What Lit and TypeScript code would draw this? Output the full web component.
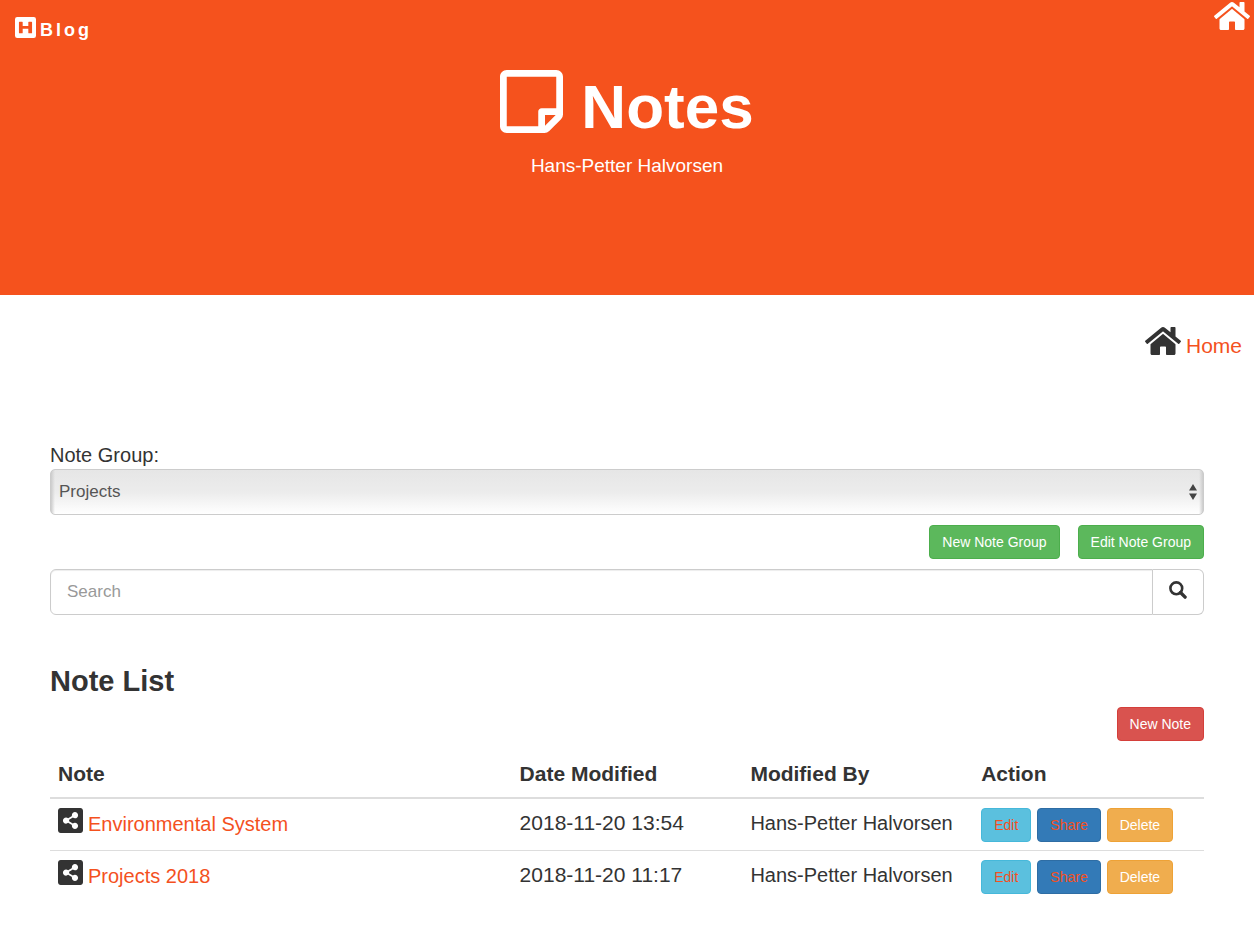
import { LitElement, html, css, svg } from "lit";
import { customElement, state } from "lit/decorators.js";

interface Note {
  title: string;
  modified: string;
  author: string;
}

const homeIcon = svg`<path d="M488 312.7V456c0 13.3-10.7 24-24 24H348c-6.6 0-12-5.4-12-12V356c0-6.6-5.4-12-12-12h-72c-6.6 0-12 5.4-12 12v112c0 6.6-5.4 12-12 12H112c-13.3 0-24-10.7-24-24V312.7c0-3.6 1.6-7 4.4-9.3l188-154.8c4.4-3.6 10.8-3.6 15.3 0l188 154.8c2.7 2.3 4.3 5.7 4.3 9.3zm83.6-60.9L488 182.6V44.4c0-6.6-5.4-12-12-12h-56c-6.6 0-12 5.4-12 12V117l-89.5-73.7c-17.7-14.6-43.3-14.6-61 0L4.4 251.8c-5.1 4.2-5.8 11.8-1.6 16.9l25.5 31c4.2 5.1 11.8 5.8 16.9 1.6l235.2-193.7c4.4-3.6 10.8-3.6 15.3 0l235.2 193.7c5.1 4.2 12.7 3.5 16.9-1.6l25.5-31c4.2-5.2 3.4-12.7-1.7-16.9z"/>`;

const noteIcon = svg`<path d="M448 348.106V80c0-26.51-21.49-48-48-48H48C21.49 32 0 53.49 0 80v351.988c0 26.51 21.49 48 48 48h268.118a48 48 0 0 0 33.941-14.059l83.882-83.882A48 48 0 0 0 448 348.106zm-128 80v-76.118h76.118L320 428.106zM400 80v223.988H296c-13.255 0-24 10.745-24 24v104H48V80h352z"/>`;

const shareIcon = svg`<path d="M448 80v352c0 26.51-21.49 48-48 48H48c-26.51 0-48-21.49-48-48V80c0-26.51 21.49-48 48-48h352c26.51 0 48 21.49 48 48zM304 296c-14.562 0-27.823 5.561-37.783 14.671l-67.958-40.775a56.339 56.339 0 0 0 0-27.793l67.958-40.775C276.177 210.439 289.438 216 304 216c30.928 0 56-25.072 56-56s-25.072-56-56-56-56 25.072-56 56c0 4.797.605 9.453 1.74 13.897l-67.958 40.775C171.823 205.561 158.562 200 144 200c-30.928 0-56 25.072-56 56s25.072 56 56 56c14.562 0 27.823-5.561 37.783-14.671l67.958 40.775a56.088 56.088 0 0 0-1.74 13.897c0 30.928 25.072 56 56 56s56-25.072 56-56C360 321.072 334.928 296 304 296z"/>`;

const brandIcon = svg`<path fill-rule="evenodd" d="M48 32h352a48 48 0 0 1 48 48v352a48 48 0 0 1-48 48H48a48 48 0 0 1-48-48V80a48 48 0 0 1 48-48zM96 132a12 12 0 0 0-12 12v224a12 12 0 0 0 12 12h56a12 12 0 0 0 12-12v-84h120v84a12 12 0 0 0 12 12h56a12 12 0 0 0 12-12V144a12 12 0 0 0-12-12h-56a12 12 0 0 0-12 12v80H164v-80a12 12 0 0 0-12-12z"/>`;

@customElement("app-root")
export class AppRoot extends LitElement {
  static styles = css`
    :host {
      display: block;
      min-height: 100vh;
      background: #fff;
      color: #333;
      font-family: "Liberation Sans", Arial, sans-serif;
      font-size: 20px;
      line-height: 30px;
    }
    *,
    *::before,
    *::after {
      box-sizing: border-box;
    }
    svg {
      display: block;
      fill: currentColor;
      flex: none;
    }
    a {
      color: #f4511e;
      text-decoration: none;
    }
    .hero {
      background: #f5521d;
      color: #fff;
      padding-bottom: 114px;
    }
    .bar {
      display: flex;
      justify-content: space-between;
      height: 70px;
      padding: 2px 4px 0 15px;
    }
    .bar a {
      color: #fff;
    }
    .brand {
      display: flex;
      gap: 4px;
      align-self: flex-start;
      padding-top: 15px;
      font-size: 18px;
      font-weight: bold;
      line-height: 26px;
      letter-spacing: 3px;
    }
    .brand svg {
      width: 21px;
      height: 21px;
    }
    .house {
      width: 36px;
      height: 28px;
    }
    .title {
      display: flex;
      justify-content: center;
      gap: 18px;
      margin: 0;
      font-size: 62px;
      line-height: 74px;
    }
    .title svg {
      width: 63px;
      height: 63px;
    }
    .byline {
      margin: 7px 0 0;
      font-size: 19px;
      text-align: center;
    }
    .crumbs {
      display: flex;
      justify-content: flex-end;
      gap: 5px;
      padding: 32px 12px 0 0;
      height: 147px;
      font-size: 21px;
      line-height: 38px;
    }
    .content {
      padding: 0 50px 32px;
    }
    .label {
      display: block;
      line-height: 27px;
    }
    .picker {
      position: relative;
    }
    .picker select {
      display: block;
      width: 100%;
      height: 46px;
      margin: 0;
      padding: 0 32px 0 8px;
      appearance: none;
      border: 1px solid #ccc;
      border-radius: 5px;
      background:
        linear-gradient(to right, #ccc, transparent) left / 4px 100% no-repeat,
        linear-gradient(to left, #ccc, transparent) right / 4px 100% no-repeat,
        linear-gradient(#e6e6e6, #ececec 50%, #fff);
      color: #555;
      font: inherit;
      font-size: 17px;
    }
    .arrows {
      position: absolute;
      right: 7px;
      top: 15px;
      width: 8px;
      height: 16px;
      fill: #444;
      pointer-events: none;
    }
    .actions {
      display: flex;
      justify-content: flex-end;
      gap: 18px;
      padding: 10px 0;
    }
    .btn {
      display: inline-block;
      height: 34px;
      margin: 0;
      padding: 0 12px;
      border: 1px solid;
      border-radius: 4px;
      color: #fff;
      font: inherit;
      font-size: 14px;
      line-height: 32px;
      white-space: nowrap;
      cursor: pointer;
    }
    .success {
      background: #5cb85c;
      border-color: #4cae4c;
    }
    .danger {
      background: #d9534f;
      border-color: #d43f3a;
    }
    .info {
      background: #5bc0de;
      border-color: #46b8da;
      color: #f4511e;
    }
    .primary {
      background: #337ab7;
      border-color: #2e6da4;
      color: #f4511e;
    }
    .warning {
      background: #f0ad4e;
      border-color: #eea236;
    }
    .search {
      display: flex;
      height: 46px;
    }
    .search input {
      flex: 1;
      min-width: 0;
      margin: 0;
      padding: 0 16px;
      border: 1px solid #ccc;
      border-radius: 6px 0 0 6px;
      box-shadow: inset 0 1px 1px rgba(0, 0, 0, 0.075);
      background: #fff;
      color: #555;
      font: inherit;
      font-size: 17px;
    }
    .search input::placeholder {
      color: #999;
      opacity: 1;
    }
    .search button {
      display: flex;
      justify-content: center;
      width: 51px;
      margin: 0;
      padding: 11px 0 0;
      border: 1px solid #ccc;
      border-left: 0;
      border-radius: 0 6px 6px 0;
      background: #fff;
      color: #333;
    }
    .search svg {
      width: 18px;
      height: 18px;
    }
    h2 {
      margin: 51px 0 0;
      font-size: 29px;
      line-height: 31px;
    }
    table {
      width: 100%;
      border-collapse: collapse;
      table-layout: fixed;
      font-size: 21px;
    }
    th {
      padding: 8px;
      border-bottom: 2px solid #ddd;
      text-align: left;
    }
    td {
      padding: 8px;
      vertical-align: top;
      line-height: 32px;
      white-space: nowrap;
    }
    tr + tr td {
      border-top: 1px solid #ddd;
    }
    .wide {
      width: 40%;
    }
    .name,
    .author {
      font-size: 20px;
    }
    .note {
      display: flex;
      gap: 5px;
      padding-top: 1px;
    }
    .note svg {
      width: 25px;
      height: 25px;
      color: #333;
    }
    .row-actions {
      display: flex;
      gap: 6px;
      padding-top: 1px;
    }
  `;

  @state() private notes: Note[] = [
    { title: "Environmental System", modified: "2018-11-20 13:54", author: "Hans-Petter Halvorsen" },
    { title: "Projects 2018", modified: "2018-11-20 11:17", author: "Hans-Petter Halvorsen" },
  ];

  private renderNote(note: Note) {
    return html`
      <tr>
        <td class="name">
          <div class="note">
            <svg viewBox="0 32 448 448" aria-hidden="true">${shareIcon}</svg>
            <a href="#note">${note.title}</a>
          </div>
        </td>
        <td>${note.modified}</td>
        <td class="author">${note.author}</td>
        <td>
          <div class="row-actions">
            <a class="btn info" href="#edit">Edit</a>
            <a class="btn primary" href="#share">Share</a>
            <button class="btn warning" type="button">Delete</button>
          </div>
        </td>
      </tr>
    `;
  }

  render() {
    return html`
      <header class="hero">
        <nav class="bar">
          <a class="brand" href="#blog">
            <svg viewBox="0 32 448 448" aria-hidden="true">${brandIcon}</svg>
            <span>Blog</span>
          </a>
          <a href="#home" aria-label="Home">
            <svg class="house" viewBox="0 32 576 448" aria-hidden="true">${homeIcon}</svg>
          </a>
        </nav>
        <h1 class="title">
          <svg viewBox="0 32 448 448" aria-hidden="true">${noteIcon}</svg>
          <span>Notes</span>
        </h1>
        <p class="byline">Hans-Petter Halvorsen</p>
      </header>
      <nav class="crumbs">
        <svg class="house" viewBox="0 32 576 448" aria-hidden="true">${homeIcon}</svg>
        <a href="#home">Home</a>
      </nav>
      <main class="content">
        <label class="label" for="group">Note Group:</label>
        <div class="picker">
          <select id="group">
            <option>Projects</option>
          </select>
          <svg class="arrows" viewBox="0 0 8 16" aria-hidden="true">
            <path d="M4 0l4 6.500H0zM4 16L0 9.500h8z" />
          </svg>
        </div>
        <div class="actions">
          <button class="btn success" type="button">New Note Group</button>
          <button class="btn success" type="button">Edit Note Group</button>
        </div>
        <form class="search" @submit=${(e: Event) => e.preventDefault()}>
          <input type="text" placeholder="Search" aria-label="Search" />
          <button type="submit" aria-label="Search">
            <svg viewBox="0 0 18 18" aria-hidden="true">
              <circle cx="7.300" cy="7.300" r="5.900" fill="none" stroke="currentColor" stroke-width="2.600" />
              <path d="M11.500 11.500l4.600 4.600" stroke="currentColor" stroke-width="3.400" stroke-linecap="round" />
            </svg>
          </button>
        </form>
        <h2>Note List</h2>
        <div class="actions">
          <button class="btn danger" type="button">New Note</button>
        </div>
        <table>
          <thead>
            <tr>
              <th class="wide">Note</th>
              <th>Date Modified</th>
              <th>Modified By</th>
              <th>Action</th>
            </tr>
          </thead>
          <tbody>
            ${this.notes.map((note) => this.renderNote(note))}
          </tbody>
        </table>
      </main>
    `;
  }
}
